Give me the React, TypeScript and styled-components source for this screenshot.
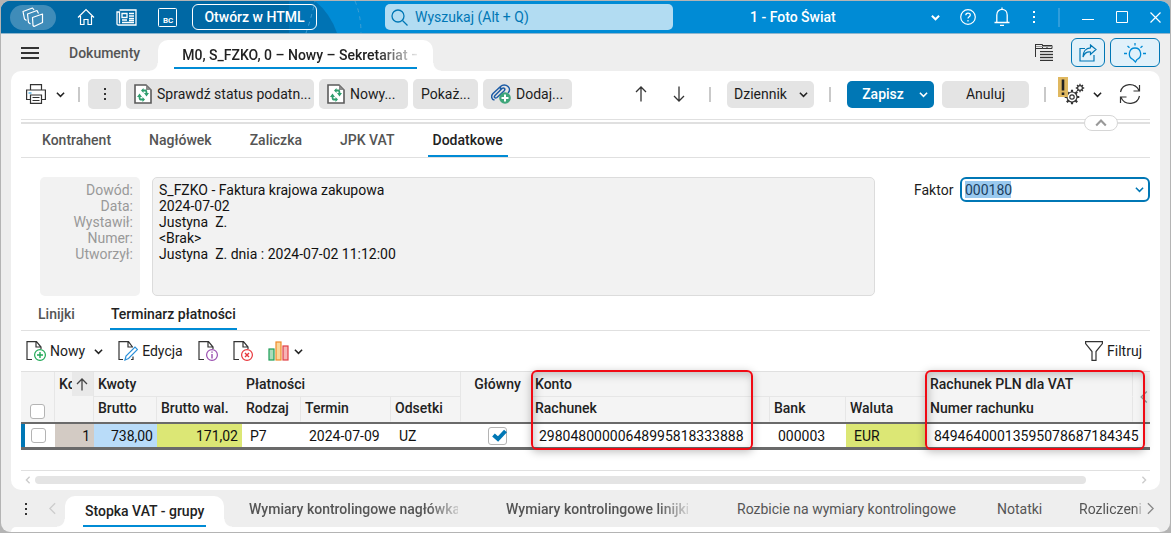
import React from "react";
import styled, { createGlobalStyle, css } from "styled-components";

const GlobalStyle = createGlobalStyle`
  *, *::before, *::after { box-sizing: border-box; }
  body {
    margin: 0;
    background: #b4b4b4;
    color: #1c1c1c;
    font: 400 14px/16px Roboto, "Liberation Sans", sans-serif;
  }
  button, input, select { font: inherit; color: inherit; margin: 0; }
  button { border: 0; background: none; padding: 0; cursor: pointer; }
  svg { display: block; flex: none; }
  a { color: inherit; text-decoration: none; }
`;

const blue = "#0077b5";
const bright = "#008bd5";
const rule = "#e0e0e0";

const Window = styled.div`
  min-height: calc(100vh - 2px);
  margin: 1px;
  display: flex;
  flex-direction: column;
  overflow: hidden;
  border-radius: 9px;
  background: #eeeeee;
`;

/* ---------- title bar ---------- */

const TitleBar = styled.header`
  position: relative;
  display: flex;
  align-items: center;
  height: 33px;
  padding: 0 9px;
  border-bottom: 1px solid #8fb5cc;
  background: ${bright};
  color: #fff;
`;

const Backdrop = styled.svg`
  position: absolute;
  left: 0;
  top: 0;
`;

const TitleGroup = styled.div<{ $gap: number }>`
  position: relative;
  flex: none;
  display: flex;
  align-items: center;
  gap: ${(p) => p.$gap}px;
`;

const WindowTools = styled(TitleGroup)`
  margin-left: 20px;
`;

const LogoButton = styled.button`
  display: flex;
  align-items: center;
  justify-content: center;
  width: 46px;
  height: 25px;
  border-radius: 13px;
  background: #3f8cb9;
`;

const IconButton = styled.button`
  flex: none;
  display: flex;
  align-items: center;
  justify-content: center;
`;

const OutlineButton = styled.button`
  position: relative;
  flex: none;
  width: 125px;
  height: 26px;
  margin-left: 15px;
  border: 1px solid #fff;
  border-radius: 6px;
  color: #fff;
  font-weight: 500;
`;

const SearchBox = styled.label`
  position: relative;
  flex: 0 1 288px;
  display: flex;
  align-items: center;
  gap: 7px;
  height: 26px;
  margin-left: 68px;
  padding: 0 6px;
  border-radius: 5px;
  background: #b2dcf2;
  color: ${blue};
`;

const SearchInput = styled.input`
  flex: 1;
  min-width: 0;
  padding: 0;
  border: 0;
  outline: 0;
  background: none;
  &::placeholder { color: ${blue}; opacity: 1; }
`;

const SelectWrap = styled.div`
  display: grid;
  align-items: center;
  > * { grid-area: 1 / 1; }
  > svg { justify-self: end; pointer-events: none; }
`;

const CompanyWrap = styled(SelectWrap)`
  position: relative;
  flex: 0 1 190px;
  margin-left: auto;
`;

const PlainSelect = styled.select`
  width: 100%;
  padding: 0;
  border: 0;
  appearance: none;
  background: none;
`;

const CompanySelect = styled(PlainSelect)`
  font-weight: 500;
  option { color: #222; }
`;

const TitleDivider = styled.span`
  width: 2px;
  height: 19px;
  background: #2f9ddb;
`;

/* ---------- document tabs ---------- */

const DocBar = styled.nav`
  display: flex;
  align-items: center;
  height: 37px;
  padding: 0 10px 0 20px;
`;

const DocTab = styled.a`
  margin-left: 30px;
  color: #555;
  font-weight: 500;
`;

const foot = css`
  content: "";
  position: absolute;
  bottom: 0;
  width: 8px;
  height: 8px;
`;

const raised = css`
  position: relative;
  display: flex;
  justify-content: center;
  align-self: flex-end;
  height: 31px;
  border-radius: 10px 10px 0 0;
  background: #fff;
  color: #222;
  font-weight: 500;
  &::before {
    ${foot}
    left: -8px;
    background: radial-gradient(circle at 0 0, transparent 7px, #fff 8px);
  }
  &::after {
    ${foot}
    right: -8px;
    background: radial-gradient(circle at 100% 0, transparent 7px, #fff 8px);
  }
`;

const DocTabActive = styled.a`
  ${raised}
  width: 275px;
  margin-left: 18px;
  padding: 0 16px;
`;

const Underlined = styled.span`
  flex: 1;
  display: flex;
  height: 29px;
  min-width: 0;
  border-bottom: 2px solid ${bright};
`;

const TabLabel = styled.span`
  flex: 1;
  padding: 7px 0 0 8px;
  overflow: hidden;
  white-space: nowrap;
  mask-image: linear-gradient(to right, #000 calc(100% - 40px), transparent 102%);
`;

const DocTools = styled.div`
  display: flex;
  align-items: center;
  gap: 5px;
  margin-left: auto;
`;

const TreeButton = styled(IconButton)`
  margin-right: 12px;
`;

const BlueBox = styled.button<{ $w: number }>`
  display: flex;
  align-items: center;
  justify-content: center;
  width: ${(p) => p.$w}px;
  height: 29px;
  border: 1px solid ${blue};
  border-radius: 6px;
  background: #e1f1fa;
`;

/* ---------- main panel ---------- */

const Panel = styled.main`
  margin: 0 10px;
  padding: 0 10px;
  border-radius: 10px;
  background: #fff;
`;

const Toolbar = styled.div`
  display: flex;
  align-items: center;
  justify-content: space-between;
  height: 49px;
  padding: 8px 9px 10px 5px;
  border-bottom: 1px solid ${rule};
`;

const Row = styled.div<{ $gap: number }>`
  display: flex;
  align-items: center;
  gap: ${(p) => p.$gap}px;
`;

const Bar = styled.span<{ $before: number; $after: number }>`
  width: 2px;
  height: 15px;
  margin: 0 ${(p) => p.$after}px 0 ${(p) => p.$before}px;
  background: #c9c9c9;
`;

const ToolButton = styled.button<{ $w: number }>`
  display: flex;
  align-items: center;
  justify-content: center;
  gap: 5px;
  width: ${(p) => p.$w}px;
  height: 30px;
  border-radius: 5px;
  background: #e4e4e4;
  white-space: nowrap;
`;

const LabelButton = styled(ToolButton)`
  justify-content: flex-start;
  padding-left: 8px;
`;

const FlatButton = styled(ToolButton)`
  height: 27px;
  margin-left: 8px;
`;

const MoreButton = styled(IconButton)`
  padding: 0 4px 0 5px;
`;

const RefreshButton = styled(IconButton)`
  margin-left: 9px;
`;

const JournalSelect = styled(SelectWrap)`
  width: 87px;
  height: 27px;
  padding: 0 6px 0 7px;
  border-radius: 5px;
  background: #e4e4e4;
`;

const SplitButton = styled.div`
  display: flex;
  width: 87px;
  height: 27px;
  border-radius: 5px;
  background: ${blue};
  color: #fff;
  font-weight: 500;
`;

const SplitMain = styled.button`
  flex: 1;
  color: #fff;
`;

const SplitMore = styled.button`
  display: flex;
  align-items: center;
  width: 15px;
`;

const CollapseRow = styled.div`
  display: flex;
  justify-content: flex-end;
  height: 4px;
  padding-right: 32px;
  border-bottom: 2px solid ${rule};
`;

const CollapseButton = styled.button`
  position: relative;
  display: flex;
  align-items: center;
  justify-content: center;
  width: 34px;
  height: 16px;
  margin-top: -5px;
  border: 1px solid #d6d6d6;
  border-radius: 8px;
  background: #fff;
`;

const Tabs = styled.nav<{ $start: number; $gap: number; $h: number }>`
  display: flex;
  gap: ${(p) => p.$gap}px;
  height: ${(p) => p.$h}px;
  padding-left: ${(p) => p.$start}px;
  border-bottom: 1px solid ${rule};
`;

const Tab = styled.a<{ $active?: boolean; $pad: number }>`
  display: flex;
  align-items: center;
  padding: 0 ${(p) => p.$pad}px;
  border-bottom: 2px solid ${(p) => (p.$active ? bright : "transparent")};
  color: ${(p) => (p.$active ? "#222" : "#555")};
  font-weight: 500;
`;

/* ---------- document details ---------- */

const Details = styled.section`
  display: flex;
  align-items: flex-start;
  padding: 19px 0 3px 19px;
`;

const InfoLabels = styled.div`
  width: 100px;
  height: 119px;
  padding: 5px 7px;
  border-radius: 5px;
  background: #f2f2f2;
  color: #999;
  text-align: right;
`;

const InfoValues = styled.div`
  flex: 1;
  height: 119px;
  margin-left: 12px;
  padding: 4px 6px;
  border: 1px solid #dcdcdc;
  border-radius: 5px;
  background: #f2f2f2;
  color: #111;
`;

const InfoLine = styled.div`
  height: 16px;
  white-space: pre;
`;

const FactorLabel = styled.label`
  width: 46px;
  margin-left: 39px;
  padding-top: 5px;
`;

const FactorBox = styled(SelectWrap)`
  width: 190px;
  height: 25px;
  padding: 0 4px 0 3px;
  border: 2px solid ${blue};
  border-radius: 6px;
`;

const FactorInput = styled.input`
  width: 100%;
  height: 17px;
  padding: 0;
  border: 0;
  outline: 0;
  background: linear-gradient(#99c9ef, #99c9ef) left / 46px 17px no-repeat;
  color: #1c4060;
`;

/* ---------- payment grid ---------- */

const GridTools = styled.div`
  display: flex;
  align-items: center;
  justify-content: space-between;
  height: 40px;
  padding: 0 8px 0 5px;
`;

const TextButton = styled.button<{ $gap?: number }>`
  display: flex;
  align-items: center;
  gap: ${(p) => p.$gap || 4}px;
`;

const GridArea = styled.div`
  position: relative;
  height: 100px;
  border-top: 1px solid ${rule};
  border-bottom: 1px solid ${rule};
`;

const Grid = styled.table`
  width: 100%;
  table-layout: fixed;
  border-collapse: separate;
  border-spacing: 0;
`;

const Th = styled.th<{ $center?: boolean; $tall?: boolean; $line?: boolean; $side?: boolean; $sub?: boolean }>`
  height: ${(p) => (p.$tall ? 50 : 25)}px;
  padding: ${(p) => (p.$tall ? 4 : 0)}px 0 ${(p) => (p.$sub ? 2 : 0)}px 4px;
  overflow: hidden;
  background: #f4f4f4;
  color: #222;
  font-weight: 500;
  text-align: ${(p) => (p.$center ? "center" : "left")};
  vertical-align: ${(p) => (p.$tall ? "top" : "middle")};
  white-space: nowrap;
  border-bottom: 1px solid ${(p) => (p.$line ? "#e6e6e6" : "#f4f4f4")};
  border-right: 1px solid ${(p) => (p.$side ? "#e6e6e6" : "#f4f4f4")};
`;

const SortHead = styled.div`
  display: flex;
  height: 24px;
  margin-top: -4px;
  align-items: center;
`;

const SortText = styled.span`
  width: 13px;
  overflow: hidden;
`;

const SortArrow = styled.span`
  display: flex;
  align-items: center;
  justify-content: center;
  width: 22px;
  height: 24px;
  background: #e9e9e9;
`;

const Td = styled.td<{ $bg?: string; $right?: boolean; $center?: boolean }>`
  height: 28px;
  padding: 0 ${(p) => (p.$right ? 4 : 0)}px 0 ${(p) => (p.$right || p.$center ? 0 : 8)}px;
  border-top: 2px solid #6a6a6a;
  border-bottom: 3px solid #6a6a6a;
  background: ${(p) => p.$bg || "#fff"};
  color: #111;
  white-space: nowrap;
  text-align: ${(p) => (p.$right ? "right" : p.$center ? "center" : "left")};
`;

const MarkerTd = styled(Td)`
  padding: 0;
`;

const Marker = styled.div`
  display: flex;
  align-items: center;
  height: 23px;
  padding-left: 6px;
  border-left: 4px solid ${blue};
`;

const CheckBox = styled.input<{ $wide?: boolean }>`
  display: inline-block;
  width: ${(p) => (p.$wide ? 19 : 15)}px;
  height: ${(p) => (p.$wide ? 18 : 15)}px;
  appearance: none;
  border: 1px solid #b4b4b4;
  border-radius: 3px;
  background: #fff;
  vertical-align: middle;
`;

const CheckedBox = styled.span`
  display: inline-grid;
  margin-left: 3px;
  vertical-align: middle;
  > * { grid-area: 1 / 1; }
  > svg { place-self: center end; pointer-events: none; }
`;

const HeadCheck = styled.div`
  padding: 26px 0 0 5px;
`;

const Callout = styled.div<{ $w: number }>`
  position: absolute;
  top: -2px;
  width: ${(p) => p.$w}px;
  height: 80px;
  border: 2px solid #f00a14;
  border-radius: 6px;
  box-shadow: 0 2px 8px rgba(0, 0, 0, 0.25), inset 2px 3px 8px rgba(0, 0, 0, 0.22);
  pointer-events: none;
`;

const AccountCallout = styled(Callout)`
  left: 510px;
`;

const VatCallout = styled(Callout)`
  right: 5px;
`;

const ScrollRow = styled.div`
  display: flex;
  align-items: center;
  height: 19px;
  padding: 0 2px 2px 3px;
`;

const Thumb = styled.div`
  flex: 1;
  height: 8px;
  margin: 0 54px 0 3px;
  border-radius: 4px;
  background: #e4e4e4;
`;

/* ---------- footer tabs ---------- */

const FootBar = styled.nav`
  display: flex;
  align-items: center;
  height: 37px;
  padding: 0 13px 0 23px;
  color: #555;
  white-space: nowrap;
`;

const BackButton = styled(IconButton)`
  margin-left: 18px;
`;

const FootTabActive = styled.a`
  ${raised}
  width: 159px;
  margin-left: 6px;
  padding: 0 18px;
`;

const FootLabel = styled.span`
  width: 100%;
  height: 31px;
  padding: 7px 2px 0;
  border-bottom: 2px solid ${bright};
`;

const FootTab = styled.a<{ $w: number; $ml: number }>`
  flex: none;
  width: ${(p) => p.$w}px;
  margin-left: ${(p) => p.$ml}px;
`;

const FadingTab = styled(FootTab)<{ $fade: number }>`
  overflow: hidden;
  font-weight: ${(p) => (p.$fade > 10 ? 500 : 400)};
  mask-image: linear-gradient(to right, #000 calc(100% - ${(p) => p.$fade}px), transparent 104%);
`;

const FootPanel = styled.div`
  flex: 1;
  min-height: 4px;
  margin: 0 10px;
  border-radius: 10px 10px 0 0;
  background: #fff;
`;

const NextButton = styled(IconButton)`
  margin-left: auto;
`;

/* ---------- icons ---------- */

type Dir = "down" | "up" | "left" | "right";
const arrows: Record<Dir, string> = {
  down: "M1 3l4 4 4-4",
  up: "M1 7l4-4 4 4",
  left: "M7 1L3 5l4 4",
  right: "M3 1l4 4-4 4",
};
const Chevron = ({ dir = "down", color = "#222", size = 9, w = 1.7 }: { dir?: Dir; color?: string; size?: number; w?: number }) => (
  <svg width={size} height={size} viewBox="0 0 10 10" fill="none" stroke={color} strokeWidth={w}>
    <path d={arrows[dir]} />
  </svg>
);

const Dots = ({ color = "#333" }: { color?: string }) => (
  <svg width="4" height="14" viewBox="0 0 4 14" fill={color}>
    <rect x="1" y="1" width="2" height="2" />
    <rect x="1" y="6" width="2" height="2" />
    <rect x="1" y="11" width="2" height="2" />
  </svg>
);

const Logo = () => (
  <svg width="22" height="20" viewBox="0 0 22 20" fill="none" stroke="#fff" strokeWidth="1.2" strokeLinejoin="round">
    <path d="M10.500 10.500L20.500 7v8.500L12 19.500l-1-1z" />
    <path d="M8.500 17l-2-1.500L5.500 7l9.500-3.500 1.500 3" />
    <path d="M4.500 13.500l-2-1.500L1 4.500 10.500 1l1.500 2" />
  </svg>
);

const Home = () => (
  <svg width="18" height="18" viewBox="0 0 18 18" fill="none" stroke="#fff" strokeWidth="1.200">
    <path d="M1 9.500L9 1.500l8 8M3.500 8v8.500h3.500v-5h4v5h3.500V8" />
  </svg>
);

const News = () => (
  <svg width="21" height="17" viewBox="0 0 21 17" fill="none" stroke="#fff" strokeWidth="1.300">
    <path d="M3.500 1h16.500v15H2.500C1.500 16 1 15.500 1 14.500V3h2.500v11.500M6 4.500h5v4H6zM13 4.500h5M13 7h5M13 9.500h5M6 11h5M6 13.500h12M13 11.500h5" />
  </svg>
);

const Bc = () => (
  <svg width="19" height="19" viewBox="0 0 19 19">
    <rect x=".5" y=".5" width="18" height="18" rx="1" fill="none" stroke="#fff" />
    <text x="5" y="15" fill="#fff" fontSize="8" fontWeight="700" fontFamily="Roboto, sans-serif">BC</text>
  </svg>
);

const Search = () => (
  <svg width="17" height="17" viewBox="0 0 17 17" fill="none" stroke={blue} strokeWidth="1.300">
    <circle cx="7" cy="7" r="6" />
    <path d="M11.500 11.500l5 5" />
  </svg>
);

const Help = () => (
  <svg width="16" height="16" viewBox="0 0 16 16" fill="none" stroke="#fff" strokeWidth="1.200">
    <circle cx="8" cy="8" r="7.300" />
    <path d="M5.800 6.300C5.800 3.300 10.300 3.500 10.300 6c0 1.800-2.300 1.700-2.300 3.500M8 11v1.500" />
  </svg>
);

const Bell = () => (
  <svg width="16" height="20" viewBox="0 0 16 20" fill="none" stroke="#fff" strokeWidth="1.300">
    <path d="M.5 15.500h15M2.800 15.500V8c0-7.500 10.400-7.500 10.400 0v7.500M6 18.300h4M8 .5v2" />
  </svg>
);

const Minimize = () => (
  <svg width="12" height="12" viewBox="0 0 12 12" stroke="#fff"><path d="M0 8.500h12" /></svg>
);
const Maximize = () => (
  <svg width="12" height="12" viewBox="0 0 12 12" fill="none" stroke="#fff"><path d="M.5.5h11v11H.5z" /></svg>
);
const Close = () => (
  <svg width="11" height="11" viewBox="0 0 11 11" stroke="#fff" strokeWidth="1.200"><path d="M.5.5l10 10M10.500.5l-10 10" /></svg>
);

const Burger = () => (
  <svg width="18" height="12" viewBox="0 0 18 12" fill="#333">
    <path d="M0 0h18v2H0zM0 5h18v2H0zM0 10h18v2H0z" />
  </svg>
);

const Tree = () => (
  <svg width="19" height="17" viewBox="0 0 19 17" fill="none" stroke="#333">
    <path d="M.5 0v13M0 .5h7.500M1 4.500h6.500v-4M7.500 1.500h9.500v3H7.500M12 1.500v3M5 7.500h13M5 10.500h13M5 13.500h13M5 16.500h13" />
    <path d="M1 2.500h16" stroke="#999" />
    <path d="M5 9h13M5 12h13M5 15h13" stroke="#aaa" />
  </svg>
);

const Share = () => (
  <svg width="18" height="18" viewBox="0 0 18 18" fill="none" stroke={blue} strokeWidth="1.200">
    <path d="M6 4.500H1v12.500h14v-6" />
    <path d="M11.500 1l5.500 4.500-5.500 5V8C8 7.500 5.500 9 4 13 4 7.500 7 4 11.500 3.800z" />
  </svg>
);

const Bulb = () => (
  <svg width="22" height="20" viewBox="0 0 22 20" fill="none" stroke={bright} strokeWidth="1.300">
    <path d="M9 16.500c-6-3-4-11.500 2-11.500s8 8.500 2 11.500l-1.500 2.500z" />
    <path d="M11 0v2.500M3.500 3l2 1.800M18.500 3l-2 1.800M0 10.500h3M19 10.500h3" />
  </svg>
);

const Printer = () => (
  <svg width="20" height="20" viewBox="0 0 20 20" fill="none" stroke="#333" strokeWidth="1.200">
    <path d="M4.500 6V.6h11V6M4.500 15.500H.6V6h18.800v9.500h-3.900M4.500 11h11v8.400h-11zM6.500 13.500h7M6.500 16.500h7" />
    <path d="M2.500 9h3" stroke={bright} />
  </svg>
);

const SyncDoc = () => (
  <svg width="18" height="20" viewBox="0 0 18 20" fill="none">
    <path d="M1 1h11l5 5v13H1z" stroke="#5a5a5a" strokeWidth="1.600" fill="#fff" />
    <path d="M12 1v5h5z" fill="#8a8a8a" />
    <path d="M9 6.500h2.500q1 0 1 3M9 15.500H6.500q-1 0-1-3" stroke="#2f9e6e" strokeWidth="1.800" />
    <path d="M10 9h5l-2.500 3.500zM3 13l2.500-3.500L8 13zM9.500 4v5L7 6.500zM8.500 13v5l2.500-2.500z" fill="#2f9e6e" />
  </svg>
);

const ClipAdd = () => (
  <svg width="20" height="20" viewBox="0 0 20 20" fill="none" stroke="#1d5ca6" strokeWidth="1.500">
    <path d="M3.500 16C0 15.500 0 11.500 2 9.500L9.500 2.500c2-2 5.500-2 7.500 0s2 4.500 0 6.500M6 13.500l7-6.500c2-2 0-4-2-2.500L4 11.500C2.500 13 4 15 6 13.500M9.500 2.500v3" />
    <circle cx="14" cy="14" r="5.800" fill="#3fa67a" stroke="none" />
    <path d="M14 10.500v7M10.500 14h7" stroke="#fff" strokeWidth="2" />
  </svg>
);

const Arrow = ({ up }: { up?: boolean }) => (
  <svg width="12" height="16" viewBox="0 0 12 16" fill="none" stroke="#333" strokeWidth="1.300">
    <path d={up ? "M6 15.500V1M1 6l5-5 5 5" : "M6 .5V15M1 10l5 5 5-5"} />
  </svg>
);

const spokes = (cx: number, cy: number, r1: number, r2: number, n: number) =>
  Array.from({ length: n }, (_, i) => {
    const a = (i * 2 * Math.PI) / n;
    return `M${cx + r1 * Math.cos(a)} ${cy + r1 * Math.sin(a)}L${cx + r2 * Math.cos(a)} ${cy + r2 * Math.sin(a)}`;
  }).join("");

const Gears = () => (
  <svg width="27" height="34" viewBox="0 0 27 34" fill="none" stroke="#333" strokeWidth="1.200">
    <circle cx="14" cy="20" r="5" />
    <circle cx="14" cy="20" r="2.200" />
    <path d={spokes(14, 20, 5, 7.3, 8)} strokeWidth="2.200" />
    <circle cx="22" cy="11" r="2.400" />
    <path d={spokes(22, 11, 2.4, 4.2, 8)} strokeWidth="1.300" />
    <rect x="0" y="0" width="10" height="20" fill="#e0b860" stroke="none" />
    <path d="M5 2.500v11M5 15.500v2.500" stroke="#222" strokeWidth="2.600" />
  </svg>
);

const Refresh = () => (
  <svg width="22" height="20" viewBox="0 0 22 20" fill="none" stroke="#333" strokeWidth="1.200">
    <path d="M1.500 8C3.500-1 16-2 20 6.500M20.500 1v6h-6M20.500 12C18.500 21 6 22 2 13.500M1.500 19v-6h6" />
  </svg>
);

type Badge = "add" | "edit" | "info" | "remove";
const badgeColor: Record<Badge, string> = { add: "#1fa855", edit: "#2a8fd8", info: "#9b4fb0", remove: "#e8363c" };
const badgePath: Record<Badge, string> = {
  add: "M14 11v6M11 14h6",
  edit: "",
  info: "M14 13v4.500M14 10.500v1.300",
  remove: "M12 12l4 4M16 12l-4 4",
};
const DocIcon = ({ kind }: { kind: Badge }) => (
  <svg width="20" height="20" viewBox="0 0 20 20" fill="none" stroke="#333" strokeWidth="1.200">
    <path d={kind === "edit" ? "M5 18.500H1V.6h9.500l4 5.400M10 .6V6h5M13 18.500h2v-3" : "M6 18.500H1V.6h9.500L15 6v2M10 .6V6h5"} />
    {kind === "edit" ? (
      <path d="M7 19l1-4L17 6l2.500 2.500-9 9z" fill="#fff" stroke={badgeColor.edit} />
    ) : (
      <g stroke={badgeColor[kind]}>
        <circle cx="14" cy="14" r="5.400" fill="#fff" />
        <path d={badgePath[kind]} strokeWidth="1.400" />
      </g>
    )}
  </svg>
);

const Chart = () => (
  <svg width="21" height="20" viewBox="0 0 21 20" strokeWidth="1.200">
    <rect x="1" y="8" width="5" height="11" fill="#a9dcbb" stroke="#1f9e58" />
    <rect x="8" y="1" width="5" height="18" fill="#fbd79a" stroke="#ee8a2c" />
    <rect x="15" y="5" width="5" height="14" fill="#f7b3b5" stroke="#e04046" />
  </svg>
);

const Funnel = () => (
  <svg width="18" height="20" viewBox="0 0 18 20" fill="none" stroke="#333" strokeWidth="1.200">
    <path d="M.6.6h16.800v2L11 10.500v8.900H7v-8.900L.6 2.600z" />
  </svg>
);

/* ---------- page ---------- */

const details: [string, string][] = [
  ["Dowód:", "S_FZKO - Faktura krajowa zakupowa"],
  ["Data:", "2024-07-02"],
  ["Wystawił:", "Justyna  Z."],
  ["Numer:", "<Brak>"],
  ["Utworzył:", "Justyna  Z. dnia : 2024-07-02 11:12:00"],
];

const formTabs = ["Kontrahent", "Nagłówek", "Zaliczka", "JPK VAT", "Dodatkowe"];

/* column widths of the payment grid; 0 takes the space that is left */
const columns = [34, 39, 63, 85, 59, 90, 70, 70, 0, 76, 80, 207, 17];

export default function App() {
  return (
    <>
      <GlobalStyle />
      <Window>
        <TitleBar>
          <Backdrop width="400" height="32" viewBox="0 0 400 32">
            <path d="M0 0h314q15 12 22 32H0z" fill="#0073b4" />
            <path d="M0 0h288v32H0z" fill="#0068a4" />
            <path d="M305 32q5-14 9-32M354 0q6 14 6 32" stroke="#3d9fd4" fill="none" strokeDasharray="4 4" />
          </Backdrop>
          <TitleGroup $gap={21}>
            <LogoButton aria-label="Menu programu"><Logo /></LogoButton>
            <IconButton aria-label="Start"><Home /></IconButton>
            <IconButton aria-label="Wiadomości"><News /></IconButton>
            <IconButton aria-label="Business Center"><Bc /></IconButton>
          </TitleGroup>
          <OutlineButton>Otwórz w HTML</OutlineButton>
          <SearchBox>
            <Search />
            <SearchInput aria-label="Wyszukaj" placeholder="Wyszukaj (Alt + Q)" />
          </SearchBox>
          <CompanyWrap>
            <CompanySelect aria-label="Firma"><option>1 - Foto Świat</option></CompanySelect>
            <Chevron color="#fff" w={2.2} />
          </CompanyWrap>
          <WindowTools $gap={22}>
            <Row $gap={18}>
              <IconButton aria-label="Pomoc"><Help /></IconButton>
              <IconButton aria-label="Powiadomienia"><Bell /></IconButton>
            </Row>
            <IconButton aria-label="Więcej"><Dots color="#fff" /></IconButton>
            <TitleDivider />
            <IconButton aria-label="Minimalizuj"><Minimize /></IconButton>
            <IconButton aria-label="Maksymalizuj"><Maximize /></IconButton>
            <IconButton aria-label="Zamknij"><Close /></IconButton>
          </WindowTools>
        </TitleBar>

        <DocBar>
          <IconButton aria-label="Menu"><Burger /></IconButton>
          <DocTab href="#dokumenty">Dokumenty</DocTab>
          <DocTabActive href="#nowy">
            <Underlined><TabLabel>M0, S_FZKO, 0 – Nowy – Sekretariat –</TabLabel></Underlined>
          </DocTabActive>
          <DocTools>
            <TreeButton aria-label="Struktura"><Tree /></TreeButton>
            <BlueBox $w={34} aria-label="Udostępnij"><Share /></BlueBox>
            <BlueBox $w={50} aria-label="Podpowiedzi"><Bulb /></BlueBox>
          </DocTools>
        </DocBar>

        <Panel>
          <Toolbar>
            <Row $gap={5}>
              <IconButton aria-label="Drukuj"><Printer /></IconButton>
              <MoreButton aria-label="Opcje wydruku"><Chevron /></MoreButton>
              <Bar $before={4} $after={3} />
              <ToolButton $w={33} aria-label="Więcej"><Dots /></ToolButton>
              <LabelButton $w={188}><SyncDoc />Sprawdź status podatn...</LabelButton>
              <LabelButton $w={89}><SyncDoc />Nowy...</LabelButton>
              <LabelButton $w={65}>Pokaż...</LabelButton>
              <LabelButton $w={89}><ClipAdd />Dodaj...</LabelButton>
            </Row>
            <Row $gap={0}>
              <Row $gap={26}>
                <IconButton aria-label="Poprzedni"><Arrow up /></IconButton>
                <IconButton aria-label="Następny"><Arrow /></IconButton>
              </Row>
              <Bar $before={24} $after={16} />
              <JournalSelect>
                <PlainSelect aria-label="Dziennik"><option>Dziennik</option></PlainSelect>
                <Chevron />
              </JournalSelect>
              <Bar $before={15} $after={16} />
              <SplitButton>
                <SplitMain>Zapisz</SplitMain>
                <SplitMore aria-label="Opcje zapisu"><Chevron color="#fff" /></SplitMore>
              </SplitButton>
              <FlatButton $w={87}>Anuluj</FlatButton>
              <Bar $before={15} $after={12} />
              <Row $gap={8}>
                <IconButton aria-label="Ustawienia"><Gears /></IconButton>
                <IconButton aria-label="Opcje ustawień"><Chevron /></IconButton>
                <RefreshButton aria-label="Odśwież"><Refresh /></RefreshButton>
              </Row>
            </Row>
          </Toolbar>
          <CollapseRow>
            <CollapseButton aria-label="Zwiń"><Chevron dir="up" color="#999" size={12} w={1.8} /></CollapseButton>
          </CollapseRow>

          <Tabs $start={16} $gap={28} $h={34}>
            {formTabs.map((t) => (
              <Tab key={t} href={"#" + t} $pad={5} $active={t === "Dodatkowe"}>{t}</Tab>
            ))}
          </Tabs>

          <Details>
            <InfoLabels>
              {details.map(([label]) => <InfoLine key={label}>{label}</InfoLine>)}
            </InfoLabels>
            <InfoValues>
              {details.map(([label, value]) => <InfoLine key={label}>{value}</InfoLine>)}
            </InfoValues>
            <FactorLabel htmlFor="faktor">Faktor</FactorLabel>
            <FactorBox>
              <FactorInput id="faktor" role="combobox" aria-expanded="false" defaultValue="000180" />
              <Chevron color={blue} />
            </FactorBox>
          </Details>

          <Tabs $start={16} $gap={34} $h={32}>
            <Tab href="#linijki" $pad={1}>Linijki</Tab>
            <Tab href="#terminarz" $pad={1} $active>Terminarz płatności</Tab>
          </Tabs>

          <GridTools>
            <Row $gap={15}>
              <Row $gap={9}>
                <TextButton><DocIcon kind="add" />Nowy</TextButton>
                <IconButton aria-label="Opcje dodawania"><Chevron /></IconButton>
              </Row>
              <TextButton><DocIcon kind="edit" />Edycja</TextButton>
              <IconButton aria-label="Informacje"><DocIcon kind="info" /></IconButton>
              <IconButton aria-label="Usuń"><DocIcon kind="remove" /></IconButton>
              <TextButton $gap={5} aria-label="Wykres"><Chart /><Chevron /></TextButton>
            </Row>
            <TextButton><Funnel />Filtruj</TextButton>
          </GridTools>

          <GridArea>
            <Grid>
              <colgroup>
                {columns.map((w, i) => <col key={i} width={w || undefined} />)}
              </colgroup>
              <thead>
                <tr>
                  <Th rowSpan={2} $tall $side>
                    <HeadCheck><CheckBox type="checkbox" aria-label="Zaznacz wszystkie" /></HeadCheck>
                  </Th>
                  <Th rowSpan={2} $tall $side>
                    <SortHead>
                      <SortText>Kol.</SortText>
                      <SortArrow>
                        <svg width="12" height="13" viewBox="0 0 12 13" fill="none" stroke="#444" strokeWidth="1.300">
                          <path d="M6 12.500V1M1 6l5-5 5 5" />
                        </svg>
                      </SortArrow>
                    </SortHead>
                  </Th>
                  <Th colSpan={2} $line>Kwoty</Th>
                  <Th colSpan={3} $line $side>Płatności</Th>
                  <Th rowSpan={2} $tall $center>Główny</Th>
                  <Th colSpan={3} $line>Konto</Th>
                  <Th $side>Rachunek PLN dla VAT</Th>
                  <Th rowSpan={2} aria-label="Zwiń kolumny"><Chevron dir="left" color="#999" size={14} w={1} /></Th>
                </tr>
                <tr>
                  <Th $sub $side>Brutto</Th>
                  <Th $sub>Brutto wal.</Th>
                  <Th $sub $side>Rodzaj</Th>
                  <Th $sub $side>Termin</Th>
                  <Th $sub $side>Odsetki</Th>
                  <Th $sub $side>Rachunek</Th>
                  <Th $sub $side>Bank</Th>
                  <Th $sub>Waluta</Th>
                  <Th $sub $side>Numer rachunku</Th>
                </tr>
              </thead>
              <tbody>
                <tr>
                  <MarkerTd><Marker><CheckBox type="checkbox" aria-label="Zaznacz wiersz 1" /></Marker></MarkerTd>
                  <Td $right $bg="#d3cbc4">1</Td>
                  <Td $right $bg="#b9dcf9">738,00</Td>
                  <Td $right $bg="#dce775">171,02</Td>
                  <Td>P7</Td>
                  <Td>2024-07-09</Td>
                  <Td>UZ</Td>
                  <Td $center>
                    <CheckedBox>
                      <CheckBox $wide type="checkbox" aria-label="Główny" defaultChecked />
                      <svg width="15" height="13" viewBox="0 0 15 13" fill="none" stroke={blue} strokeWidth="4">
                        <path d="M1.500 6L6 10l7.500-8" />
                      </svg>
                    </CheckedBox>
                  </Td>
                  <Td>29804800000648995818333888</Td>
                  <Td>000003</Td>
                  <Td $bg="#dce775">EUR</Td>
                  <Td>84946400013595078687184345</Td>
                  <Td />
                </tr>
              </tbody>
            </Grid>
            <AccountCallout $w={222} />
            <VatCallout $w={220} />
          </GridArea>

          <ScrollRow>
            <Chevron dir="left" color="#ccc" size={8} />
            <Thumb />
            <Chevron dir="right" color="#ccc" size={8} />
          </ScrollRow>
        </Panel>

        <FootBar>
          <IconButton aria-label="Lista zakładek"><Dots /></IconButton>
          <BackButton aria-label="Poprzednie zakładki"><Chevron dir="left" color="#ccc" size={13} w={1} /></BackButton>
          <FootTabActive href="#stopka"><FootLabel>Stopka VAT - grupy</FootLabel></FootTabActive>
          <FadingTab href="#naglowka" $w={209} $ml={25} $fade={30}>Wymiary kontrolingowe nagłówka</FadingTab>
          <FadingTab href="#linijki-wymiary" $w={182} $ml={48} $fade={30}>Wymiary kontrolingowe linijki</FadingTab>
          <FootTab href="#rozbicie" $w={217} $ml={49}>Rozbicie na wymiary kontrolingowe</FootTab>
          <FootTab href="#notatki" $w={46} $ml={43}>Notatki</FootTab>
          <FadingTab href="#rozliczenia" $w={62} $ml={36} $fade={6}>Rozliczenia</FadingTab>
          <NextButton aria-label="Następne zakładki"><Chevron dir="right" color="#888" size={13} w={1} /></NextButton>
        </FootBar>
        <FootPanel />
      </Window>
    </>
  );
}
